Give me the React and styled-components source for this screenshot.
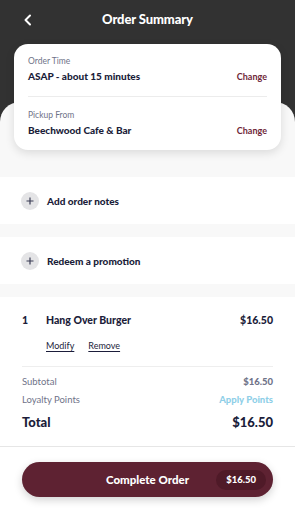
import React from "react";
import styled, { createGlobalStyle } from "styled-components";

const Global = createGlobalStyle`
  * { box-sizing: border-box; }
  html, body { margin: 0; padding: 0; background: #ffffff; }
  body { font-family: "Lato", "Noto Sans", sans-serif; -webkit-font-smoothing: antialiased; }
`;

const NAVY = "#1b1d3a";
const GRAY = "#6f7389";
const MAROON = "#6e2638";

const Page = styled.div`
  width: 295px;
  min-height: 512px;
  background: #f8f8f8;
  display: flex;
  flex-direction: column;
  overflow: hidden;
`;

const Header = styled.header`
  background: #323232;
  padding: 0 14px 20px;
  display: flex;
  flex-direction: column;
`;

const TopBar = styled.div`
  height: 44px;
  display: flex;
  align-items: center;
  justify-content: center;
  position: relative;
`;

const BackButton = styled.button`
  position: absolute;
  left: 4px;
  top: 10px;
  width: 20px;
  height: 20px;
  padding: 0;
  border: 0;
  background: transparent;
  display: flex;
  align-items: center;
  justify-content: center;
`;

const Title = styled.h1`
  margin: 0;
  margin-top: -6px;
  color: #ffffff;
  font-size: 13px;
  font-weight: 900;
  letter-spacing: -0.1px;
`;

const Card = styled.div`
  position: relative;
  z-index: 1;
  background: #ffffff;
  border-radius: 14px;
  box-shadow: 0 3px 10px rgba(0, 0, 0, 0.12);
  padding: 0 14px;
  margin-bottom: -48px;
`;

const CardRow = styled.div`
  display: flex;
  align-items: flex-end;
  justify-content: space-between;
  padding: ${(p) => (p.$last ? "13px 0 13px" : "12px 0 13px")};
  border-bottom: ${(p) => (p.$last ? "none" : "1px solid #ececec")};
`;

const CardText = styled.div`
  display: flex;
  flex-direction: column;
  gap: 3px;
`;

const Label = styled.span`
  font-size: 8.5px;
  color: ${GRAY};
  line-height: 11px;
`;

const Value = styled.span`
  font-size: 10px;
  font-weight: 900;
  color: ${NAVY};
  line-height: 13px;
`;

const ChangeLink = styled.span`
  font-size: 9px;
  font-weight: 700;
  color: ${MAROON};
  line-height: 13px;
`;

const Sheet = styled.main`
  flex: 1;
  background: #f8f8f8;
  border-radius: 20px 20px 0 0;
  margin-top: -20px;
  padding-top: 75px;
  display: flex;
  flex-direction: column;
`;

const ActionSection = styled.div`
  background: #ffffff;
  height: 47px;
  display: flex;
  align-items: center;
  gap: 8px;
  padding: 0 21px;
  margin-bottom: ${(p) => p.$gap}px;
`;

const PlusCircle = styled.span`
  width: 18px;
  height: 18px;
  border-radius: 50%;
  background: #e4e4e6;
  display: flex;
  align-items: center;
  justify-content: center;
`;

const ActionText = styled.span`
  font-size: 10px;
  font-weight: 900;
  color: ${NAVY};
`;

const OrderSection = styled.section`
  background: #ffffff;
  flex: 1;
  display: flex;
  flex-direction: column;
`;

const OrderBody = styled.div`
  padding: 16px 22px 0;
`;

const ItemRow = styled.div`
  display: flex;
  align-items: center;
  font-size: 10.5px;
  font-weight: 900;
  color: ${NAVY};
  line-height: 14px;
`;

const Qty = styled.span`
  width: 24px;
`;

const ItemName = styled.span`
  flex: 1;
`;

const ItemActions = styled.div`
  display: flex;
  gap: 14px;
  padding-left: 24px;
  margin-top: 13px;
  padding-bottom: 14px;
  border-bottom: 1px solid #eeeeee;
`;

const UnderLink = styled.span`
  font-size: 9px;
  color: ${NAVY};
  text-decoration: underline;
  text-underline-offset: 2px;
  line-height: 12px;
`;

const Totals = styled.div`
  display: flex;
  flex-direction: column;
  padding: 6px 0 13px;
`;

const TotalRow = styled.div`
  display: flex;
  justify-content: space-between;
  align-items: center;
  height: ${(p) => (p.$big ? "22px" : "18px")};
  line-height: ${(p) => (p.$big ? "22px" : "18px")};
  margin-top: ${(p) => (p.$big ? "2px" : "0")};
  font-size: ${(p) => (p.$big ? "13px" : "9.5px")};
  font-weight: ${(p) => (p.$big ? 900 : 400)};
  color: ${(p) => (p.$big ? NAVY : GRAY)};
`;

const Amount = styled.span`
  font-weight: 900;
  color: ${(p) => p.$color || "inherit"};
`;

const Footer = styled.footer`
  border-top: 1px solid #e6e6e6;
  padding: 15px 22px 16px;
`;

const CompleteButton = styled.button`
  width: 100%;
  height: 35px;
  border: 0;
  border-radius: 18px;
  background: #5e2232;
  box-shadow: 0 3px 8px rgba(0, 0, 0, 0.18);
  display: grid;
  grid-template-columns: 1fr auto 1fr;
  align-items: center;
  padding: 0 7px;
  font-family: inherit;
`;

const ButtonLabel = styled.span`
  grid-column: 2;
  color: #ffffff;
  font-size: 11.5px;
  font-weight: 900;
`;

const PricePill = styled.span`
  grid-column: 3;
  justify-self: end;
  background: #4f1a28;
  color: #ffffff;
  font-size: 9.5px;
  font-weight: 900;
  line-height: 12px;
  border-radius: 11px;
  padding: 4px 10px;
`;

const Plus = () => (
  <svg width="8" height="8" viewBox="0 0 8 8">
    <path d="M4 0.5V7.5M0.5 4H7.5" stroke="#3a3c55" strokeWidth="1.2" />
  </svg>
);

export default function App() {
  return (
    <>
      <Global />
      <Page>
        <Header>
          <TopBar>
            <BackButton aria-label="Back">
              <svg width="10" height="12" viewBox="0 0 10 12">
                <path
                  d="M7 1.5L2.5 6L7 10.5"
                  fill="none"
                  stroke="#ffffff"
                  strokeWidth="2"
                  strokeLinecap="round"
                  strokeLinejoin="round"
                />
              </svg>
            </BackButton>
            <Title>Order Summary</Title>
          </TopBar>
          <Card>
            <CardRow>
              <CardText>
                <Label>Order Time</Label>
                <Value>ASAP - about 15 minutes</Value>
              </CardText>
              <ChangeLink>Change</ChangeLink>
            </CardRow>
            <CardRow $last>
              <CardText>
                <Label>Pickup From</Label>
                <Value>Beechwood Cafe &amp; Bar</Value>
              </CardText>
              <ChangeLink>Change</ChangeLink>
            </CardRow>
          </Card>
        </Header>
        <Sheet>
          <ActionSection $gap={13}>
            <PlusCircle>
              <Plus />
            </PlusCircle>
            <ActionText>Add order notes</ActionText>
          </ActionSection>
          <ActionSection $gap={13}>
            <PlusCircle>
              <Plus />
            </PlusCircle>
            <ActionText>Redeem a promotion</ActionText>
          </ActionSection>
          <OrderSection>
            <OrderBody>
              <ItemRow>
                <Qty>1</Qty>
                <ItemName>Hang Over Burger</ItemName>
                <span>$16.50</span>
              </ItemRow>
              <ItemActions>
                <UnderLink>Modify</UnderLink>
                <UnderLink>Remove</UnderLink>
              </ItemActions>
              <Totals>
                <TotalRow>
                  <span>Subtotal</span>
                  <Amount>$16.50</Amount>
                </TotalRow>
                <TotalRow>
                  <span>Loyalty Points</span>
                  <Amount $color="#8fcfe8">Apply Points</Amount>
                </TotalRow>
                <TotalRow $big>
                  <span>Total</span>
                  <Amount>$16.50</Amount>
                </TotalRow>
              </Totals>
            </OrderBody>
            <Footer>
              <CompleteButton>
                <ButtonLabel>Complete Order</ButtonLabel>
                <PricePill>$16.50</PricePill>
              </CompleteButton>
            </Footer>
          </OrderSection>
        </Sheet>
      </Page>
    </>
  );
}
